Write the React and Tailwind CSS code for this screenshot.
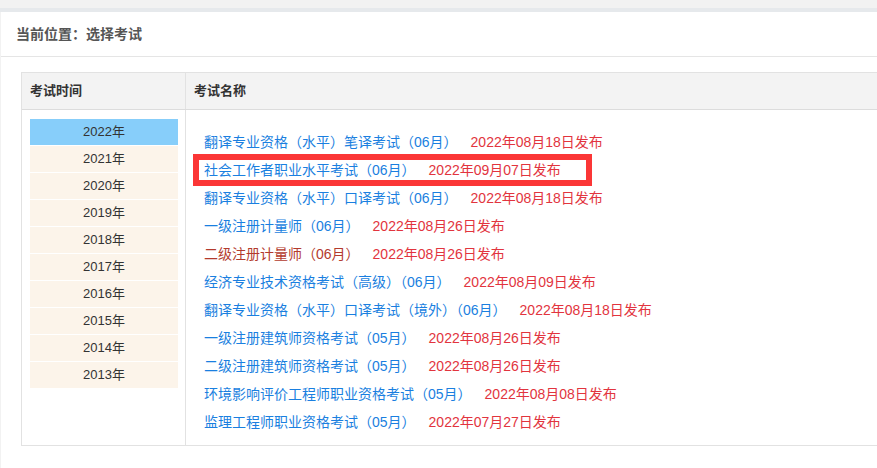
const years = ["2022", "2021", "2020", "2019", "2018", "2017", "2016", "2015", "2014", "2013"];

const exams = [
  { name: "翻译专业资格（水平）笔译考试（06月）", date: "2022年08月18日发布" },
  { name: "社会工作者职业水平考试（06月）", date: "2022年09月07日发布", marked: true },
  { name: "翻译专业资格（水平）口译考试（06月）", date: "2022年08月18日发布" },
  { name: "一级注册计量师（06月）", date: "2022年08月26日发布" },
  { name: "二级注册计量师（06月）", date: "2022年08月26日发布", visited: true },
  { name: "经济专业技术资格考试（高级）（06月）", date: "2022年08月09日发布" },
  { name: "翻译专业资格（水平）口译考试（境外）（06月）", date: "2022年08月18日发布" },
  { name: "一级注册建筑师资格考试（05月）", date: "2022年08月26日发布" },
  { name: "二级注册建筑师资格考试（05月）", date: "2022年08月26日发布" },
  { name: "环境影响评价工程师职业资格考试（05月）", date: "2022年08月08日发布" },
  { name: "监理工程师职业资格考试（05月）", date: "2022年07月27日发布" },
];

export default function App() {
  return (
    <div
      className="w-[877px] h-[468px] overflow-hidden bg-[#f2f2f2]"
      style={{ fontFamily: '"Liberation Sans", "Noto Sans CJK SC", sans-serif' }}
    >
      <div className="h-[8px]"></div>
      <div className="h-[4px] bg-[#e6e9ec]"></div>
      <div className="ml-px bg-white h-[456px]">
        {/* breadcrumb */}
        <div className="h-[45px] flex items-center px-[15px] border-b border-[#e5e5e5] text-[14px] font-bold text-[#555]">
          当前位置：选择考试
        </div>

        <div className="pt-[15px] pl-[20px]">
          <div className="w-[880px] border border-[#e2e2e2]">
            {/* header row */}
            <div className="flex h-[37px] bg-[#f3f3f3] border-b border-[#dcdcdc] text-[13px] font-bold text-[#333]">
              <div className="w-[164px] flex items-center pl-[8px] border-r border-[#e2e2e2]">考试时间</div>
              <div className="flex-1 flex items-center pl-[8px]">考试名称</div>
            </div>

            {/* body */}
            <div className="flex">
              <div className="w-[164px] border-r border-[#e2e2e2] pl-[8px] pt-[9px]">
                {years.map((y, i) => (
                  <div
                    key={y}
                    className={
                      "w-[148px] h-[26px] mb-px flex items-center justify-center text-[13px] text-[#333] " +
                      (i === 0 ? "bg-[#87cefa]" : "bg-[#fcf4ea]")
                    }
                  >
                    {y}年
                  </div>
                ))}
              </div>

              <div className="flex-1 pl-[18px] pt-[18px] pb-[9px]">
                {exams.map((e) => (
                  <div key={e.name} className="relative h-[28px] flex items-center text-[14px] whitespace-nowrap">
                    <span className={e.visited ? "text-[#b33a2d]" : "text-[#1a7fe0]"}>{e.name}</span>
                    <span className="ml-[13px] text-[#e2343e]">{e.date}</span>
                    {e.marked && (
                      <div className="absolute left-[-11px] top-[-2px] w-[399px] h-[32px] border-[6px] border-[#fb3636]"></div>
                    )}
                  </div>
                ))}
              </div>
            </div>
          </div>
        </div>
      </div>
    </div>
  );
}
